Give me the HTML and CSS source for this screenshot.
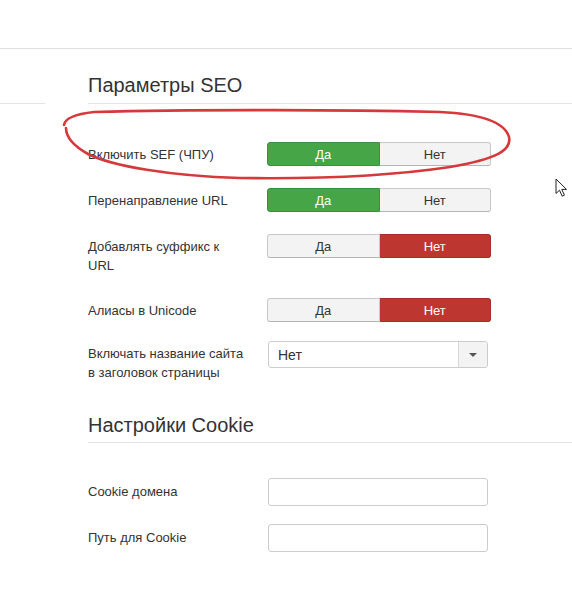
FILE: index.html
```html
<!DOCTYPE html>
<html lang="ru">
<head>
<meta charset="utf-8">
<title>Параметры SEO</title>
<link rel="stylesheet" href="styles.css">
</head>
<body>
<div class="page">
  <header class="topbar"></header>
  <div class="layout">
    <aside class="sidebar"><div class="side-line"></div></aside>
    <main class="content">
      <section class="section seo">
        <h2 class="legend">Параметры SEO</h2>
        <div class="rows rows-seo">
          <div class="row">
            <label class="label">Включить SEF (ЧПУ)</label>
            <div class="toggle">
              <span class="opt on-yes">Да</span>
              <span class="opt">Нет</span>
            </div>
          </div>
          <div class="row">
            <label class="label">Перенаправление URL</label>
            <div class="toggle">
              <span class="opt on-yes">Да</span>
              <span class="opt">Нет</span>
            </div>
          </div>
          <div class="row">
            <label class="label">Добавлять суффикс к URL</label>
            <div class="toggle">
              <span class="opt">Да</span>
              <span class="opt on-no">Нет</span>
            </div>
          </div>
          <div class="row row-after-wrap">
            <label class="label">Алиасы в Unicode</label>
            <div class="toggle">
              <span class="opt">Да</span>
              <span class="opt on-no">Нет</span>
            </div>
          </div>
          <div class="row row-tight">
            <label class="label">Включать название сайта в заголовок страницы</label>
            <div class="select">
              <span class="select-value">Нет</span>
              <span class="select-arrow"><span class="caret"></span></span>
            </div>
          </div>
        </div>
      </section>
      <section class="section cookie">
        <h2 class="legend">Настройки Cookie</h2>
        <div class="rows rows-cookie">
          <div class="row">
            <label class="label label-input">Cookie домена</label>
            <div class="input"></div>
          </div>
          <div class="row">
            <label class="label label-input">Путь для Cookie</label>
            <div class="input"></div>
          </div>
        </div>
      </section>
    </main>
  </div>
  <svg class="scribble" width="572" height="606" viewBox="0 0 572 606" aria-hidden="true">
    <path d="M64,125 C65,118 76,114 94,112 C200,109 350,110 440,112 C482,114 505,123 509,137 C512,150 497,159 450,167 C390,176 310,179 240,178 C170,176 112,166 88,154 C72,145 66,136 66,128" fill="none" stroke="#d6393b" stroke-width="2.6" stroke-linecap="round"/>
  </svg>
  <svg class="cursor" width="14" height="20" viewBox="0 0 14 20" aria-hidden="true">
    <path d="M1,1 L1,15.5 L4.5,12.2 L7.2,18.2 L9.4,17.2 L6.8,11.4 L11.5,11.4 Z" fill="#fff" stroke="#222" stroke-width="1" stroke-linejoin="round"/>
  </svg>
</div>
</body>
</html>
```

FILE: styles.css
```css
* { box-sizing: border-box; }
html, body { margin: 0; padding: 0; background: #fff; }
body {
  font-family: "Liberation Sans", Arial, sans-serif;
  font-size: 13px;
  color: #333;
}
.page {
  position: relative;
  width: 572px;
  height: 606px;
  overflow: hidden;
}
.topbar {
  height: 49px;
  border-bottom: 1px solid #e0e0e0;
}
.layout {
  display: flex;
}
.sidebar {
  width: 45px;
  flex: none;
}
.side-line {
  height: 55px;
  border-bottom: 1px solid #e3e3e3;
}
.content {
  flex: 1;
  padding-left: 43px;
}
.legend {
  margin: 0;
  font-size: 20px;
  font-weight: normal;
  line-height: 24px;
  color: #333;
  border-bottom: 1px solid #e3e3e3;
}
.seo .legend {
  padding-top: 24px;
  padding-bottom: 6px;
}
.cookie .legend {
  margin-top: 31px;
  padding-bottom: 5px;
}
.rows {
  display: flex;
  flex-direction: column;
}
.rows-seo {
  margin-top: 38px;
  gap: 22px;
}
.row-after-wrap {
  margin-top: 1px;
}
.row-tight {
  margin-top: -3px;
}
.rows-cookie {
  margin-top: 35px;
  gap: 18px;
}
.row {
  display: flex;
  align-items: flex-start;
}
.label {
  width: 180px;
  flex: none;
  padding-top: 3px;
  padding-right: 20px;
  line-height: 19px;
}
.label-input {
  padding-top: 4px;
}
.toggle {
  display: flex;
  width: 224px;
  height: 24px;
  margin-left: -1px;
}
.opt {
  flex: 1;
  display: flex;
  align-items: center;
  justify-content: center;
  background: #f3f3f3;
  border: 1px solid #c8c8c8;
  border-bottom-color: #b5b5b5;
  color: #333;
}
.opt:first-child {
  border-radius: 3px 0 0 3px;
}
.opt:last-child {
  border-radius: 0 3px 3px 0;
  border-left: none;
}
.opt.on-yes {
  background: #46a546;
  border-color: #3b913b;
  color: #fff;
}
.opt.on-no {
  background: #bd362f;
  border-color: #a52e28;
  color: #fff;
}
.select {
  display: flex;
  width: 220px;
  height: 27px;
  border: 1px solid #ccc;
  border-radius: 3px;
  background: #fff;
}
.select-value {
  flex: 1;
  display: flex;
  align-items: center;
  padding-left: 9px;
  font-size: 14px;
  color: #333;
}
.select-arrow {
  width: 29px;
  display: flex;
  align-items: center;
  justify-content: center;
  background: #f3f3f3;
  border-left: 1px solid #d6d6d6;
  border-radius: 0 3px 3px 0;
}
.caret {
  width: 0;
  height: 0;
  border-left: 4px solid transparent;
  border-right: 4px solid transparent;
  border-top: 4px solid #555;
}
.input {
  width: 220px;
  height: 28px;
  border: 1px solid #ccc;
  border-radius: 3px;
  background: #fff;
}
.scribble {
  position: absolute;
  left: 0;
  top: 0;
  pointer-events: none;
}
.cursor {
  position: absolute;
  left: 555px;
  top: 178px;
}
```
